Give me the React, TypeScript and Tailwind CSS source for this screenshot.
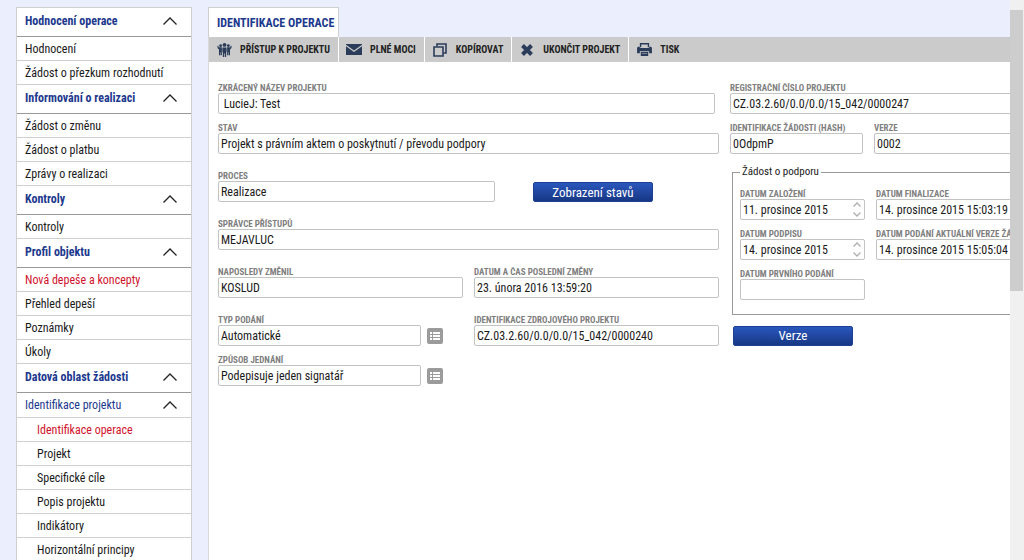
import { useId } from "react";

type Item = { label: string; kind?: "sub" | "active" | "sub-active" };

const sections: { title: string; items: Item[] }[] = [
  { title: "Hodnocení operace", items: [{ label: "Hodnocení" }, { label: "Žádost o přezkum rozhodnutí" }] },
  {
    title: "Informování o realizaci",
    items: [{ label: "Žádost o změnu" }, { label: "Žádost o platbu" }, { label: "Zprávy o realizaci" }],
  },
  { title: "Kontroly", items: [{ label: "Kontroly" }] },
  {
    title: "Profil objektu",
    items: [
      { label: "Nová depeše a koncepty", kind: "active" },
      { label: "Přehled depeší" },
      { label: "Poznámky" },
      { label: "Úkoly" },
    ],
  },
  { title: "Datová oblast žádosti", items: [] },
];

const projectItems: Item[] = [
  { label: "Identifikace operace", kind: "sub-active" },
  { label: "Projekt", kind: "sub" },
  { label: "Specifické cíle", kind: "sub" },
  { label: "Popis projektu", kind: "sub" },
  { label: "Indikátory", kind: "sub" },
  { label: "Horizontální principy", kind: "sub" },
];

const itemStyles = {
  plain: "pl-2 text-[#1a1a1a]",
  active: "pl-2 text-[#d0142c]",
  sub: "pl-5 text-[#1a1a1a]",
  "sub-active": "pl-5 text-[#d0142c]",
};

function Caret() {
  return (
    <svg width="16" height="10" viewBox="0 0 16 10" fill="none" stroke="#222" strokeWidth="1.3">
      <path d="M1.5 8.5 8 2l6.5 6.5" />
    </svg>
  );
}

function MenuItem({ label, kind }: Item) {
  return (
    <li className="border-b border-[#cfcfcf]">
      <a href="#" className={`flex h-[23px] items-center text-xs whitespace-nowrap ${itemStyles[kind ?? "plain"]}`}>
        {label}
      </a>
    </li>
  );
}

function Sidebar() {
  return (
    <nav className="w-44 shrink-0 self-start border-x border-t border-[#cfcfcf] bg-white">
      {sections.map((section) => (
        <section key={section.title}>
          <button
            type="button"
            className="flex h-[29px] w-full items-center justify-between border-b border-[#999] pr-[13px] pb-0.5 pl-2 text-xs font-bold text-[#1c398e]"
          >
            {section.title}
            <Caret />
          </button>
          <ul>
            {section.items.map((item) => (
              <MenuItem key={item.label} {...item} />
            ))}
          </ul>
        </section>
      ))}
      <button
        type="button"
        className="flex h-[25px] w-full items-center justify-between border-b border-[#cfcfcf] pr-[13px] pl-2 text-xs text-[#1c398e]"
      >
        Identifikace projektu
        <Caret />
      </button>
      <ul>
        {projectItems.map((item) => (
          <MenuItem key={item.label} {...item} />
        ))}
      </ul>
    </nav>
  );
}

function PeopleIcon() {
  return (
    <svg width="15" height="14" viewBox="0 0 16 16" fill="#2b3c5b">
      <circle cx="8" cy="2.2" r="2.2" />
      <circle cx="3.6" cy="3" r="1.6" />
      <circle cx="12.4" cy="3" r="1.6" />
      <path d="M5.6 5h4.800v5.600H9.900V16H8.400v-4h-.8v4H6.100v-5.400h-.5z" />
      <path d="M0 3.200h1.200v1.600H5v9.300H3.500v-3.400H3v3.400H1.700V7.300L0 5.800zM16 3.200h-1.200v1.600H11v9.300h1.500v-3.400h.5v3.400h1.300V7.300L16 5.800z" />
    </svg>
  );
}

function MailIcon() {
  return (
    <svg width="16" height="11" viewBox="0 0 16 11" fill="#2b3c5b">
      <path d="M0 0h16v.8L8 6.400 0 .8z" />
      <path d="M0 2.200 8 7.900l8-5.700V11H0z" />
    </svg>
  );
}

function CopyIcon() {
  return (
    <svg width="14" height="14" viewBox="0 0 14 14" fill="none" stroke="#2b3c5b" strokeWidth="1.6">
      <path d="M4 3.5V1h9v9h-2.5" />
      <path d="M1 4h9v9H1z" />
    </svg>
  );
}

function CrossIcon() {
  return (
    <svg width="12" height="12" viewBox="0 0 12 12" fill="none" stroke="#2b3c5b" strokeWidth="4">
      <path d="m1.5 1.5 9 9M10.5 1.5l-9 9" />
    </svg>
  );
}

function PrintIcon() {
  return (
    <svg width="15" height="13" viewBox="0 0 16 14" fill="#2b3c5b">
      <path d="M3 0h10v4.5h-1.500v-3h-7v3H3z" />
      <path d="M1 4h2v1.5h10V4h2l1 1v6h-3V9H3v2H0V5z" />
      <path d="M4 9.8h8V14H4zm1.2 1.2v.7h5.600V11z" />
    </svg>
  );
}

const actions = [
  { label: "PŘÍSTUP K PROJEKTU", icon: <PeopleIcon /> },
  { label: "PLNÉ MOCI", icon: <MailIcon /> },
  { label: "KOPÍROVAT", icon: <CopyIcon /> },
  { label: "UKONČIT PROJEKT", icon: <CrossIcon /> },
  { label: "TISK", icon: <PrintIcon /> },
];

function Toolbar() {
  return (
    <div className="flex h-[25px] bg-[#cbcbcb]">
      {actions.map((action) => (
        <button
          key={action.label}
          type="button"
          className="flex items-center gap-1.5 border-r border-white pr-2 pl-[7px] text-[10px] font-bold text-[#222] last:border-r-0"
        >
          <span className="flex w-4 justify-center">{action.icon}</span>
          <span className="pl-0.5 whitespace-nowrap">{action.label}</span>
        </button>
      ))}
    </div>
  );
}

type FieldProps = { label: string; value: string; className?: string; spinner?: boolean; picker?: boolean };

function Field({ label, value, className = "", spinner, picker }: FieldProps) {
  const id = useId();
  return (
    <div className={`min-w-0 ${className}`}>
      <label htmlFor={id} className="block h-[11px] text-[9px] leading-3 font-bold whitespace-nowrap text-[#808080]">
        {label}
      </label>
      <div className="flex items-center gap-1.5">
        <div className="flex h-[21px] min-w-0 grow items-center rounded-xs border border-[#c3c3c3] bg-white">
          <input id={id} defaultValue={value} className="h-full w-full min-w-0 px-0.5 text-xs text-[#1a1a1a] outline-none" />
          {spinner && (
            <svg className="mr-0.5 shrink-0" width="10" height="17" viewBox="0 0 10 17" fill="none" stroke="#b0b0b0" strokeWidth="1.4">
              <path d="M1.500 5.500 5 2l3.500 3.500M1.500 11.500 5 15l3.500-3.500" />
            </svg>
          )}
        </div>
        {picker && (
          <button type="button" aria-label={`Vybrat: ${label}`} className="flex size-4 shrink-0 items-center justify-center rounded-xs bg-[#9b9b9b]">
            <svg width="10" height="8" viewBox="0 0 10 8" fill="#fff">
              <path d="M0 0h2v2H0zM3 0h7v2H3zM0 3h2v2H0zM3 3h7v2H3zM0 6h2v2H0zM3 6h7v2H3z" />
            </svg>
          </button>
        )}
      </div>
    </div>
  );
}

function BlueButton({ children }: { children: string }) {
  return (
    <button type="button" className="h-5 w-30 rounded-xs border border-[#1c3f94] bg-linear-to-b from-[#2a57bd] to-[#173784] text-[13px] leading-none text-white">
      {children}
    </button>
  );
}

function ProjectForm() {
  return (
    <form className="flex gap-[11px] pt-5 pl-[9px]">
      <div className="flex w-[501px] shrink-0 flex-col">
        <Field label="ZKRÁCENÝ NÁZEV PROJEKTU" value=" LucieJ: Test" className="mr-1 mb-2" />
        <Field label="STAV" value="Projekt s právním aktem o poskytnutí / převodu podpory" className="mb-4" />
        <div className="mb-4 flex items-end gap-[38px]">
          <Field label="PROCES" value="Realizace" className="w-[277px]" />
          <BlueButton>Zobrazení stavů</BlueButton>
        </div>
        <Field label="SPRÁVCE PŘÍSTUPŮ" value="MEJAVLUC" className="mb-4" />
        <div className="mb-4 grid grid-cols-2 gap-[11px]">
          <Field label="NAPOSLEDY ZMĚNIL" value="KOSLUD" />
          <Field label="DATUM A ČAS POSLEDNÍ ZMĚNY" value="23. února 2016 13:59:20" />
        </div>
        <div className="mb-2 flex justify-between">
          <Field label="TYP PODÁNÍ" value="Automatické" className="w-[225px]" picker />
          <Field label="IDENTIFIKACE ZDROJOVÉHO PROJEKTU" value="CZ.03.2.60/0.0/0.0/15_042/0000240" className="w-[245px]" />
        </div>
        <Field label="ZPŮSOB JEDNÁNÍ" value="Podepisuje jeden signatář" className="w-[225px]" picker />
      </div>

      <div className="flex w-80 shrink-0 flex-col">
        <Field label="REGISTRAČNÍ ČÍSLO PROJEKTU" value="CZ.03.2.60/0.0/0.0/15_042/0000247" className="mb-2" />
        <div className="mb-3 flex gap-[11px]">
          <Field label="IDENTIFIKACE ŽÁDOSTI (HASH)" value="0OdpmP" className="w-[133px]" />
          <Field label="VERZE" value="0002" className="grow" />
        </div>
        <fieldset className="ml-0.5 border border-[#999] px-[7px] pt-[10px] pb-[14px]">
          <legend className="px-0.5 text-[11px] leading-3 text-[#1a1a1a]">Žádost o podporu</legend>
          <div className="grid grid-cols-[125px_1fr] gap-x-[11px] gap-y-2">
            <Field label="DATUM ZALOŽENÍ" value="11. prosince 2015" spinner />
            <Field label="DATUM FINALIZACE" value="14. prosince 2015 15:03:19" />
            <Field label="DATUM PODPISU" value="14. prosince 2015" spinner />
            <Field label="DATUM PODÁNÍ AKTUÁLNÍ VERZE ŽÁDOSTI" value="14. prosince 2015 15:05:04" />
            <Field label="DATUM PRVNÍHO PODÁNÍ" value="" />
          </div>
        </fieldset>
        <div className="mt-2 ml-[3px]">
          <BlueButton>Verze</BlueButton>
        </div>
      </div>
    </form>
  );
}

export default function App() {
  return (
    <div className="flex h-screen overflow-hidden bg-[#ebeffd] pl-4 font-['Roboto_Condensed','Liberation_Sans_Narrow','Roboto',sans-serif]">
      <div className="flex min-w-0 grow gap-4 overflow-hidden pt-[7px]">
        <Sidebar />
        <main className="flex min-w-0 grow flex-col overflow-hidden">
          <h1 className="flex h-[30px] items-center self-start border border-b-0 border-[#cfcfcf] bg-white pr-1 pl-2 text-xs font-bold text-[#1c398e]">
            IDENTIFIKACE OPERACE
          </h1>
          <div className="grow border-l border-[#d9d9d9] bg-white">
            <Toolbar />
            <ProjectForm />
          </div>
        </main>
      </div>
      <div className="w-3.5 shrink-0 bg-[#f0f0f0] pt-2.5">
        <div className="h-[281px] w-[13px] bg-[#cdcdcd]" />
      </div>
    </div>
  );
}
